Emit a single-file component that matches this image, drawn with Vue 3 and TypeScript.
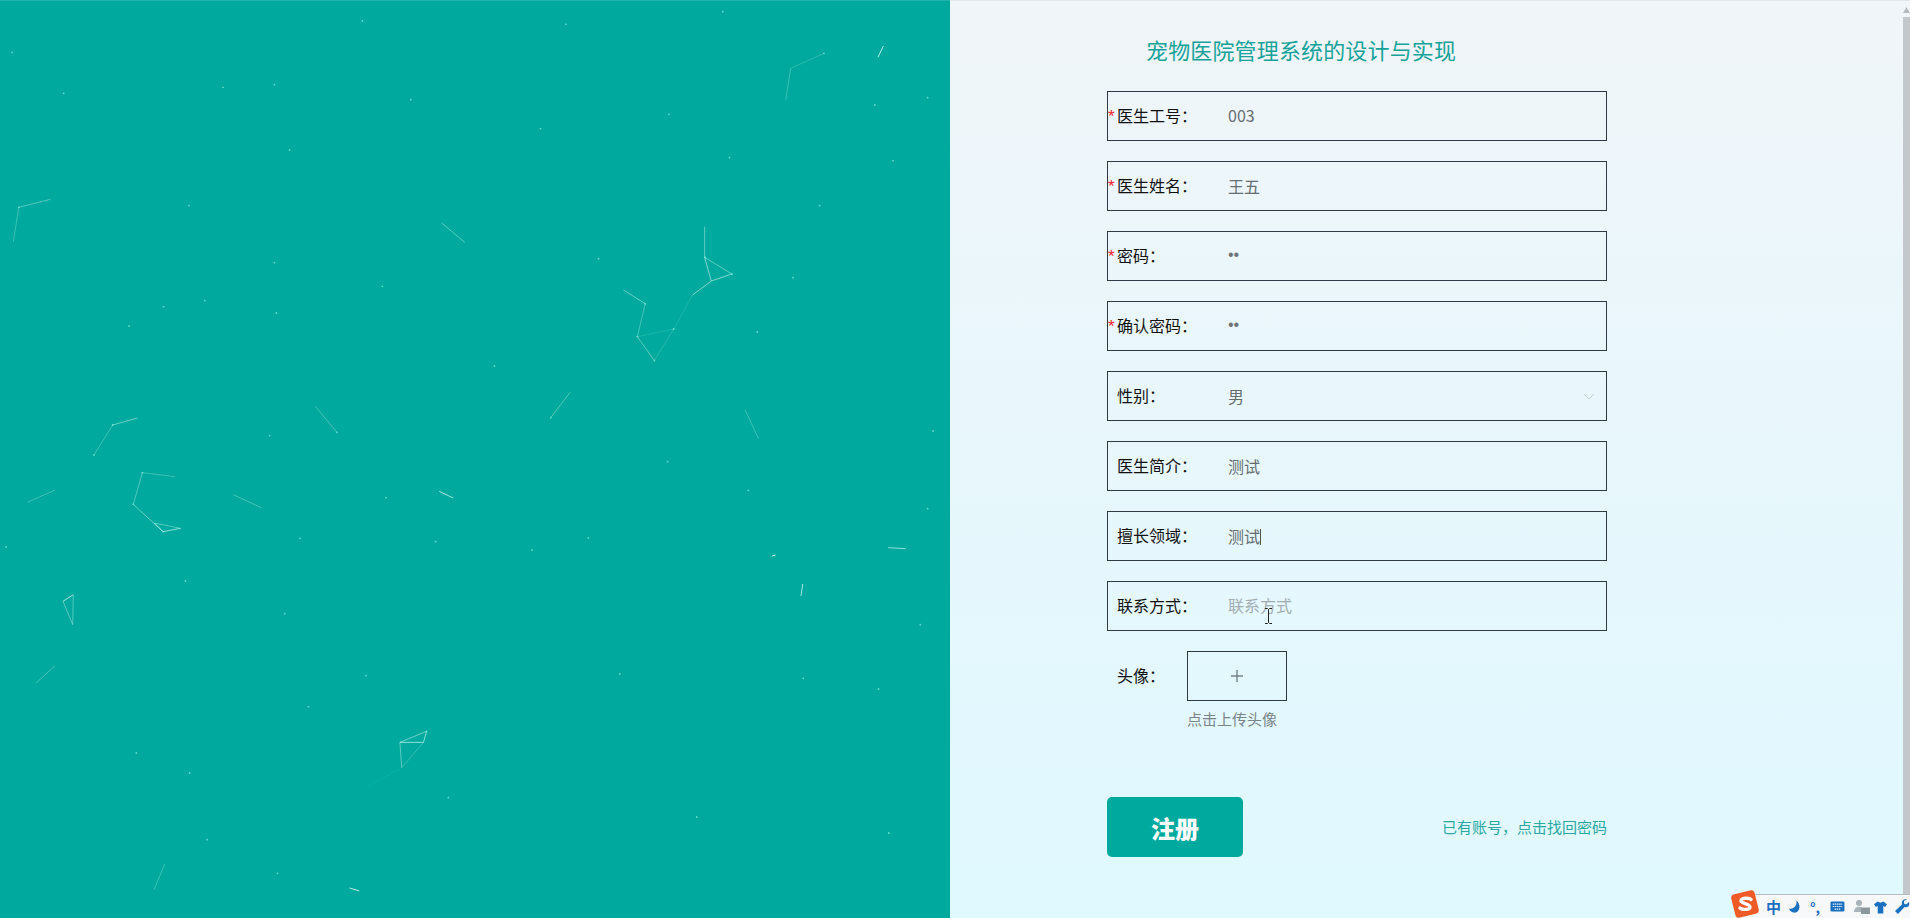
<script setup lang="ts">
interface Seg { x1: number; y1: number; x2: number; y2: number; o: number }
type Raw = [number, number, number, number, number]

const XS = 950 / 1568

const topRaw: Raw[] = [
  [1458, 138, 1449, 172, 0.9],
  [1360, 160, 1305, 205, 0.22], [1305, 205, 1297, 300, 0.3],
  [83, 598, 31, 622, 0.4], [31, 622, 22, 725, 0.3],
  [729, 669, 767, 727, 0.45],
  [1163, 680, 1163, 772, 0.45], [1163, 772, 1208, 822, 0.45], [1163, 772, 1174, 843, 0.6],
  [1174, 843, 1208, 822, 0.6], [1174, 843, 1143, 885, 0.6], [1143, 885, 1112, 987, 0.15],
  [1112, 987, 1080, 1082, 0.2], [1029, 870, 1065, 911, 0.5], [1065, 911, 1052, 1010, 0.35],
  [1052, 1010, 1112, 987, 0.15], [1052, 1010, 1080, 1082, 0.45],
  [941, 1177, 909, 1253, 0.4],
  [1230, 1230, 1252, 1316, 0.3],
  [520, 1218, 556, 1297, 0.35],
  [227, 1254, 186, 1275, 0.5], [186, 1275, 155, 1365, 0.3]
]
const bottomRaw: Raw[] = [
  [91, 96, 45, 133, 0.3],
  [235, 44, 289, 56, 0.3], [235, 44, 220, 139, 0.4], [220, 139, 269, 221, 0.5],
  [255, 195, 298, 211, 0.4], [269, 221, 298, 211, 0.7], [255, 195, 269, 221, 0.7],
  [385, 110, 431, 149, 0.35],
  [725, 100, 748, 120, 0.8],
  [1274, 294, 1280, 291, 1],
  [1466, 269, 1495, 272, 0.7],
  [1325, 378, 1322, 414, 0.8],
  [121, 410, 104, 430, 0.8], [104, 430, 120, 500, 0.45], [121, 410, 120, 500, 0.4],
  [91, 623, 59, 676, 0.35],
  [704, 820, 660, 853, 0.5], [660, 853, 699, 853, 0.7], [704, 820, 699, 853, 0.7],
  [660, 853, 663, 929, 0.45], [699, 853, 663, 929, 0.25], [663, 929, 607, 985, 0.06],
  [272, 1218, 254, 1296, 0.3],
  [577, 1290, 593, 1299, 0.9]
]
const topDots: [number, number][] = [
  [1193, 35], [598, 63], [934, 73], [20, 157], [105, 280], [368, 262], [453, 254], [678, 299],
  [1444, 315], [1531, 293], [1104, 343], [892, 386], [478, 450], [1204, 473], [1474, 482],
  [312, 617], [1353, 617], [453, 788], [988, 776], [631, 859], [1309, 833], [338, 902], [270, 920],
  [456, 939], [213, 978], [1250, 996], [1112, 987], [816, 1098], [445, 1307], [1540, 1293], [1360, 160],
  [1164, 772], [1208, 822], [1080, 1082], [1052, 1010], [1065, 911], [31, 622], [186, 1275], [155, 1365], [909, 1253], [556, 1297]
]
const bottomDots: [number, number][] = [
  [1102, 11], [1235, 97], [637, 119], [1531, 152], [495, 241], [719, 251], [971, 240], [878, 276],
  [10, 267], [306, 369], [470, 467], [1519, 500], [604, 653], [1023, 648], [1326, 661], [1450, 693],
  [509, 746], [225, 885], [313, 945], [740, 1019], [1150, 1077], [1467, 1125], [342, 1145], [458, 1246],
  [235, 44], [220, 139], [269, 221], [704, 820]
]

const toSeg = (r: Raw, dy: number): Seg => ({
  x1: r[0] * XS, y1: r[1] / 3 + dy, x2: r[2] * XS, y2: r[3] / 3 + dy, o: r[4]
})
const segments: Seg[] = [...topRaw.map((r) => toSeg(r, 0)), ...bottomRaw.map((r) => toSeg(r, 458))]
const dots = [
  ...topDots.map((d) => ({ x: d[0] * XS, y: d[1] / 3 })),
  ...bottomDots.map((d) => ({ x: d[0] * XS, y: d[1] / 3 + 458 }))
]

interface Field { label: string; value: string; required?: boolean; kind?: string }
const fields: Field[] = [
  { label: '医生工号：', value: '003', required: true, kind: 'num' },
  { label: '医生姓名：', value: '王五', required: true },
  { label: '密码：', value: '••', required: true, kind: 'pw' },
  { label: '确认密码：', value: '••', required: true, kind: 'pw' },
  { label: '性别：', value: '男', kind: 'select' },
  { label: '医生简介：', value: '测试' },
  { label: '擅长领域：', value: '测试', kind: 'focused' },
  { label: '联系方式：', value: '联系方式', kind: 'placeholder' }
]
</script>

<template>
  <div class="page">
    <section class="hero">
      <svg class="stars" width="950" height="918" viewBox="0 0 950 918">
        <line v-for="(s, i) in segments" :key="'l' + i" :x1="s.x1" :y1="s.y1" :x2="s.x2" :y2="s.y2" stroke="#c8f7f1" stroke-width="1" :stroke-opacity="s.o" />
        <circle v-for="(d, i) in dots" :key="'d' + i" :cx="d.x" :cy="d.y" r="0.9" fill="#8ceee4" fill-opacity="0.7" />
      </svg>
    </section>
    <main class="panel">
      <form class="form">
        <h1 class="title">宠物医院管理系统的设计与实现</h1>
        <div v-for="f in fields" :key="f.label" class="field">
          <span v-if="f.required" class="star">*</span>
          <label class="label">{{ f.label }}</label>
          <span class="value" :class="f.kind">{{ f.value }}<i v-if="f.kind === 'focused'" class="text-caret"></i></span>
          <svg v-if="f.kind === 'select'" class="chev" width="12" height="8" viewBox="0 0 12 8">
            <path d="M1 1l5 5 5-5" fill="none" stroke="#c3d0d6" stroke-width="1" />
          </svg>
          <svg v-if="f.kind === 'placeholder'" class="ibeam" width="9" height="16" viewBox="0 0 9 16">
            <path d="M1 .5h2.500l1 1 1-1H8M4.500 1.500v13M1 15.500h2.500l1-1 1 1H8" fill="none" stroke="#222" stroke-width="1" />
          </svg>
        </div>
        <div class="avatar">
          <label class="label">头像：</label>
          <div class="upload">
            <div class="box">
              <svg width="14" height="14" viewBox="0 0 14 14">
                <path d="M7 1v12M1 7h12" stroke="#75838a" stroke-width="1.400" fill="none" />
              </svg>
            </div>
            <p class="hint">点击上传头像</p>
          </div>
        </div>
        <div class="actions">
          <button type="button" class="submit">注册</button>
          <a class="link">已有账号，点击找回密码</a>
        </div>
      </form>
      <div class="scroll">
        <svg class="arrow" width="7" height="6" viewBox="0 0 7 6"><path d="M3.500 0L7 6H0z" fill="#b5b9bc" /></svg>
        <div class="thumb"></div>
      </div>
      <div class="ime">
        <svg class="ime-s" width="30" height="30" viewBox="0 0 30 30">
          <rect x="3" y="3" width="24" height="24" rx="4" fill="#ef5a26" transform="rotate(-14 15 15)" />
          <path d="M21 10.500c-1-1.600-9-2.200-10 1-.8 3 9 3 9 6.500 0 3-8 3-10 1" fill="none" stroke="#fff" stroke-width="3.400" stroke-linecap="round" />
        </svg>
        <span class="ime-zh">中</span>
        <svg width="15" height="15" viewBox="0 0 15 15"><path d="M9 1c1 5-2 9-8 9 1 3 4 4.500 7 4 5-1 6-9 1-13z" fill="#1b6fc0" /></svg>
        <span class="ime-punc">°,</span>
        <svg width="16" height="13" viewBox="0 0 16 13">
          <rect x=".5" y="1" width="15" height="11" rx="1.500" fill="#1b6fc0" />
          <path d="M3 4h10M3 6.500h10M5 9.300h6" stroke="#fff" stroke-width="1.200" stroke-dasharray="1.500 .8" />
        </svg>
        <span class="ime-user">
          <svg width="17" height="15" viewBox="0 0 17 15">
            <circle cx="6" cy="4" r="3" fill="#a9b3ba" /><path d="M1 13c0-7 10-7 10 0z" fill="#a9b3ba" />
            <rect x="8" y="8.500" width="9" height="6.500" fill="#8d979e" />
          </svg>
        </span>
        <svg width="14" height="14" viewBox="0 0 14 14"><path d="M4 1L0 4l2 3 2-1v8h6V6l2 1 2-3-4-3-3 1.500z" fill="#1b6fc0" /></svg>
        <svg class="ime-wrench" width="15" height="15" viewBox="0 0 15 15"><path d="M14 3l-3 2.500-2-1L9 2l3-2C9-.5 6 2 7 5.500L0 12l3 3 6.500-7C13 9 15 6.500 14 3z" fill="#1b6fc0" /></svg>
      </div>
    </main>
  </div>
</template>

<style>
html, body { margin: 0; padding: 0; overflow: hidden; }
</style>

<style scoped>
.page {
  display: flex;
  width: 1910px;
  height: 918px;
  overflow: hidden;
  font-family: "Noto Sans CJK SC", "Liberation Sans", sans-serif;
}
.hero {
  width: 950px;
  flex: none;
  height: 918px;
  background: #00a99d;
  border-top: 1px solid #22b0aa;
  box-sizing: border-box;
}
.stars { display: block; margin-top: -1px; }
.panel {
  flex: 1;
  position: relative;
  background: linear-gradient(180deg, #f0f5f9 0%, #dff9ff 100%);
  border-top: 1px solid #e4e7ea;
  box-sizing: border-box;
}
.form {
  width: 500px;
  margin-left: 157px;
  display: flex;
  flex-direction: column;
}
.title {
  margin: 32px 0 25px 39px;
  height: 33px;
  font-size: 22px;
  line-height: 33px;
  font-weight: 400;
  letter-spacing: 0.15px;
  color: #17a39a;
  white-space: nowrap;
}
.field {
  position: relative;
  display: flex;
  align-items: center;
  height: 50px;
  margin-bottom: 20px;
  padding-left: 9px;
  border: 1px solid #2f3a44;
  box-sizing: border-box;
}
.star {
  position: absolute;
  left: 0;
  top: 15px;
  font-size: 17px;
  line-height: 20px;
  color: #f5222d;
  font-family: "Liberation Sans", sans-serif;
}
.label {
  width: 111px;
  flex: none;
  margin-top: -2px;
  font-size: 16px;
  line-height: 24px;
  color: #111;
  white-space: nowrap;
}
.value {
  font-size: 16px;
  line-height: 24px;
  color: #666e72;
  white-space: nowrap;
}
.value.num { margin-top: -2px; }
.value.pw {
  font-family: "Liberation Sans", sans-serif;
  font-size: 16px;
  margin-top: -3px;
  color: #6e7478;
}
.value.placeholder { color: #a2adb1; margin-top: -3px; }
.text-caret {
  display: inline-block;
  width: 1px;
  height: 16px;
  background: #555;
  vertical-align: -2px;
}
.chev { position: absolute; right: 11px; top: 21px; }
.ibeam { position: absolute; left: 156px; top: 26px; }
.avatar {
  display: flex;
  align-items: flex-start;
  padding-left: 10px;
}
.avatar .label { width: 70px; margin-top: 12px; }
.box {
  width: 100px;
  height: 50px;
  border: 1px solid #2f3a44;
  box-sizing: border-box;
  display: flex;
  align-items: center;
  justify-content: center;
}
.hint {
  margin: 7px 0 0;
  font-size: 15px;
  line-height: 22px;
  color: #7b8489;
}
.actions {
  margin-top: 67px;
  display: flex;
  align-items: center;
  justify-content: space-between;
}
.submit {
  width: 136px;
  height: 60px;
  border: 0;
  border-radius: 5px;
  background: #00a99d;
  color: #fff;
  font: 900 24px "Noto Sans CJK SC", sans-serif;
}
.link {
  font-size: 15px;
  line-height: 22px;
  color: #2aa8a4;
}
.scroll {
  position: absolute;
  top: 0;
  right: 0;
  width: 7px;
  height: 893px;
}
.arrow { position: absolute; top: 6px; left: 0; }
.thumb {
  position: absolute;
  top: 16px;
  bottom: 0;
  left: 0;
  right: 0;
  background: #c4c8cb;
}
.ime {
  position: absolute;
  right: 0;
  bottom: 0;
  width: 175px;
  height: 24px;
  padding-left: 31px;
  box-sizing: border-box;
  display: flex;
  align-items: center;
  gap: 8px;
  overflow: visible;
  background: #f6f8fa;
  border-top: 1px solid #b7bcc0;
}
.ime-s { position: absolute; left: -5px; top: -6px; }
.ime-zh { width: 14px; font-size: 15px; font-weight: 700; color: #1b6fc0; line-height: 20px; }
.ime-punc { width: 13px; font-size: 14px; font-weight: 700; color: #1b6fc0; line-height: 16px; white-space: nowrap; }
.ime-user { display: flex; margin-right: -4px; }
.ime-wrench { flex: none; }
</style>
